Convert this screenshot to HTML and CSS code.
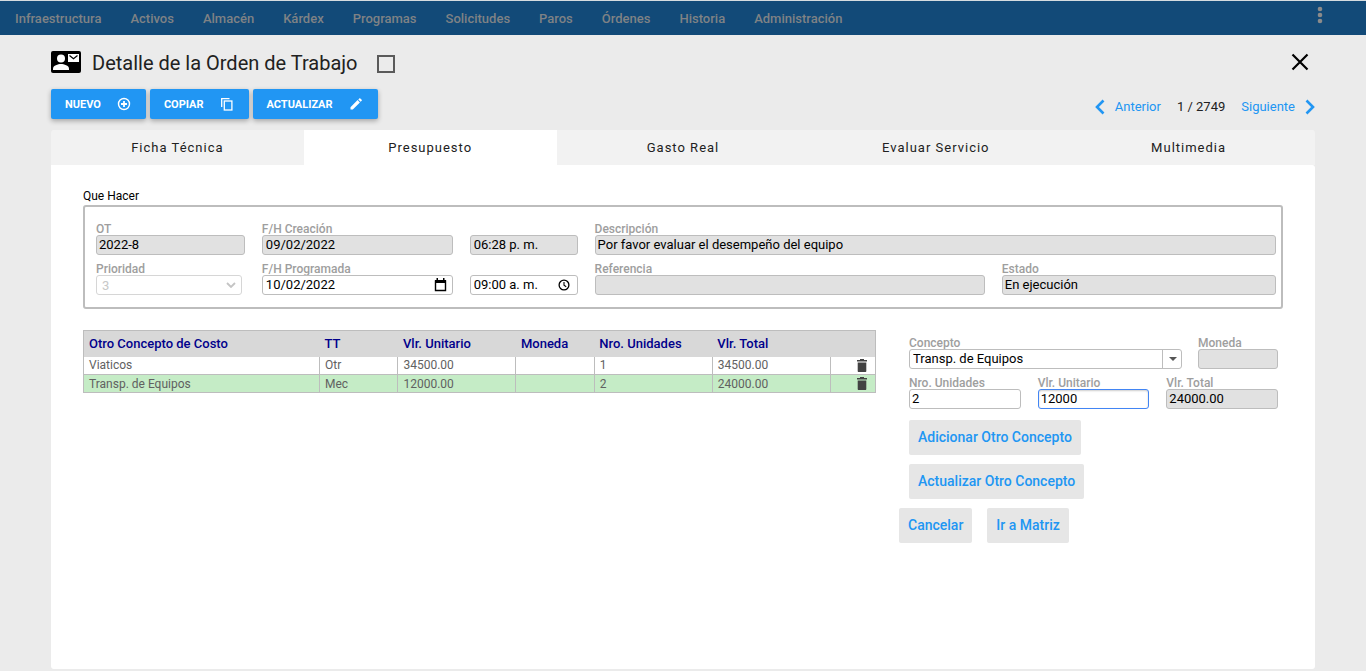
FILE: index.html
```html
<!DOCTYPE html>
<html lang="es">

    <head>
        <meta charset="utf-8">
        <title>Detalle de la Orden de Trabajo</title>
        <meta name="viewport" content="width=device-width, initial-scale=1.0">
        <link rel="stylesheet" href="styles.css">
    </head>

    <body>
        <header class="topbar">
            <nav class="menu">
                <a href="#">Infraestructura</a>
                <a href="#">Activos</a>
                <a href="#">Almacén</a>
                <a href="#">Kárdex</a>
                <a href="#">Programas</a>
                <a href="#">Solicitudes</a>
                <a href="#">Paros</a>
                <a href="#">Órdenes</a>
                <a href="#">Historia</a>
                <a href="#">Administración</a>
            </nav>
            <button type="button" class="icon-btn more" aria-label="Más opciones">
                <svg width="6" height="18" viewBox="0 0 6 18"><circle cx="3" cy="3" r="2.3"/><circle cx="3" cy="9" r="2.3"/><circle cx="3" cy="15" r="2.3"/></svg>
            </button>
        </header>

        <main class="page">
            <div class="title-row">
                <svg class="title-icon" width="30" height="22" viewBox="0 0 30 22">
                    <rect width="30" height="22" rx="2"/>
                    <circle cx="10" cy="7.500" r="4" fill="#fff"/>
                    <path d="M2 19v-1.500c0-3 5-4.500 8-4.500s8 1.500 8 4.500V19z" fill="#fff"/>
                    <rect x="17" y="3" width="11" height="8" fill="#fff"/>
                    <path d="M18.500 4.500l4 3.200 4-3.200" fill="none" stroke="#000" stroke-width="1.200"/>
                </svg>
                <h1>Detalle de la Orden de Trabajo</h1>
                <input type="checkbox" class="check" aria-label="Seleccionar orden">
                <button type="button" class="icon-btn close" aria-label="Cerrar">
                    <svg width="18" height="18" viewBox="0 0 18 18"><path d="M1.500 1.500l15 15M16.500 1.500l-15 15" fill="none" stroke="#000" stroke-width="2.200"/></svg>
                </button>
            </div>

            <div class="toolbar">
                <button type="button" class="action">NUEVO
                    <svg width="14" height="14" viewBox="0 0 14 14" fill="none" stroke="#fff" stroke-width="1.400"><circle cx="7" cy="7" r="5.500"/><path d="M7 4v6M4 7h6" stroke-width="1.800"/></svg>
                </button>
                <button type="button" class="action">COPIAR
                    <svg width="14" height="14" viewBox="0 0 14 14" fill="none" stroke="#fff" stroke-width="1.300"><path d="M1.700 10V1.600h7.800"/><rect x="4.300" y="4" width="7.600" height="9"/></svg>
                </button>
                <button type="button" class="action">ACTUALIZAR
                    <svg width="14" height="14" viewBox="0 0 14 14" fill="#fff"><path d="M1.500 10.200L8.600 3.100l2.300 2.300-7.100 7.100H1.500zM9.300 2.400l1-1c.3-.3.700-.3 1 0l1.400 1.400c.3.300.3.700 0 1l-1.100 1z"/></svg>
                </button>
                <div class="pager">
                    <a href="#"><svg width="10" height="16" viewBox="0 0 10 16"><path d="M8.500 1.500L2 8l6.500 6.500" fill="none" stroke="#2196f3" stroke-width="2.600"/></svg>Anterior</a>
                    <span>1 / 2749</span>
                    <a href="#">Siguiente<svg width="10" height="16" viewBox="0 0 10 16"><path d="M1.500 1.500L8 8l-6.500 6.500" fill="none" stroke="#2196f3" stroke-width="2.600"/></svg></a>
                </div>
            </div>

            <div class="tabs" role="tablist">
                <button type="button" role="tab">Ficha Técnica</button>
                <button type="button" role="tab" class="active" aria-selected="true">Presupuesto</button>
                <button type="button" role="tab">Gasto Real</button>
                <button type="button" role="tab">Evaluar Servicio</button>
                <button type="button" role="tab">Multimedia</button>
            </div>

            <section class="panel">
                <div class="caption">Que Hacer</div>
                <div class="order">
                    <div class="field">
                        <label for="ot">OT</label>
                        <input type="text" id="ot" value="2022-8" readonly>
                    </div>
                    <div class="field">
                        <label for="created">F/H Creación</label>
                        <input type="text" id="created" class="spaced" value="09/02/2022" readonly>
                    </div>
                    <div class="field">
                        <input type="text" class="spaced" value="06:28 p. m." aria-label="Hora de creación" readonly>
                    </div>
                    <div class="field">
                        <label for="description">Descripción</label>
                        <input type="text" id="description" value="Por favor evaluar el desempeño del equipo" readonly>
                    </div>

                    <div class="field priority">
                        <label for="priority">Prioridad</label>
                        <div class="box">
                            <select id="priority" disabled>
                                <option>3</option>
                            </select>
                            <svg class="box-icon" width="10" height="6" viewBox="0 0 10 6"><path d="M1 1l4 4 4-4" fill="none" stroke="#c4c4c4" stroke-width="1.800"/></svg>
                        </div>
                    </div>
                    <div class="field">
                        <label for="planned">F/H Programada</label>
                        <div class="box">
                            <input type="text" id="planned" class="spaced" value="10/02/2022">
                            <svg class="box-icon" width="13" height="14" viewBox="0 0 13 14"><path d="M1.500 3h10v9.500h-10z" fill="none" stroke="#000" stroke-width="1.400"/><path d="M1 2h11v3H1zM2.500 0h1.500v2H2.500zM9 0h1.500v2H9z"/></svg>
                        </div>
                    </div>
                    <div class="field">
                        <div class="box">
                            <input type="text" class="spaced" value="09:00 a. m." aria-label="Hora programada">
                            <svg class="box-icon clock" width="12" height="12" viewBox="0 0 12 12" fill="none" stroke="#000" stroke-width="1.300"><circle cx="6" cy="6" r="4.900"/><path d="M6 3v3.200l2.200 1.500" stroke-width="1.100"/></svg>
                        </div>
                    </div>
                    <div class="split">
                        <div class="field">
                            <label for="reference">Referencia</label>
                            <input type="text" id="reference" readonly>
                        </div>
                        <div class="field">
                            <label for="status">Estado</label>
                            <input type="text" id="status" value="En ejecución" readonly>
                        </div>
                    </div>
                </div>

                <div class="costs">
                    <table class="grid">
                        <colgroup>
                            <col class="c-name">
                            <col class="c-small">
                            <col class="c-mid">
                            <col class="c-small">
                            <col class="c-mid">
                            <col class="c-mid">
                            <col>
                        </colgroup>
                        <thead>
                            <tr>
                                <th>Otro Concepto de Costo</th>
                                <th>TT</th>
                                <th>Vlr. Unitario</th>
                                <th>Moneda</th>
                                <th>Nro. Unidades</th>
                                <th>Vlr. Total</th>
                                <th></th>
                            </tr>
                        </thead>
                        <tbody>
                            <tr>
                                <td>Viaticos</td>
                                <td>Otr</td>
                                <td>34500.00</td>
                                <td></td>
                                <td>1</td>
                                <td>34500.00</td>
                                <td class="remove"><button type="button" class="icon-btn" aria-label="Eliminar"><svg width="10" height="13" viewBox="0 0 10 13"><path d="M3 0h4v1h3v1.500H0V1h3zM.7 3.500h8.600V12c0 .6-.4 1-1 1H1.700c-.6 0-1-.4-1-1z"/></svg></button></td>
                            </tr>
                            <tr class="selected">
                                <td>Transp. de Equipos</td>
                                <td>Mec</td>
                                <td>12000.00</td>
                                <td></td>
                                <td>2</td>
                                <td>24000.00</td>
                                <td class="remove"><button type="button" class="icon-btn" aria-label="Eliminar"><svg width="10" height="13" viewBox="0 0 10 13"><path d="M3 0h4v1h3v1.500H0V1h3zM.7 3.500h8.600V12c0 .6-.4 1-1 1H1.700c-.6 0-1-.4-1-1z"/></svg></button></td>
                            </tr>
                        </tbody>
                    </table>

                    <form class="cost-form">
                        <div class="form-row concept-row">
                            <div class="field">
                                <label for="concept">Concepto</label>
                                <div class="box">
                                    <select id="concept">
                                        <option>Transp. de Equipos</option>
                                        <option>Viaticos</option>
                                    </select>
                                    <span class="drop"><svg width="8" height="4" viewBox="0 0 8 4"><path d="M0 0h8L4 4z" fill="#555"/></svg></span>
                                </div>
                            </div>
                            <div class="field">
                                <label for="currency">Moneda</label>
                                <input type="text" id="currency" readonly>
                            </div>
                        </div>
                        <div class="form-row values-row">
                            <div class="field">
                                <label for="units">Nro. Unidades</label>
                                <input type="text" id="units" value="2">
                            </div>
                            <div class="field">
                                <label for="unitPrice">Vlr. Unitario</label>
                                <input type="text" id="unitPrice" value="12000">
                            </div>
                            <div class="field">
                                <label for="total">Vlr. Total</label>
                                <input type="text" id="total" value="24000.00" readonly>
                            </div>
                        </div>
                        <div class="form-buttons">
                            <button type="button" class="flat">Adicionar Otro Concepto</button>
                            <button type="button" class="flat">Actualizar Otro Concepto</button>
                        </div>
                        <div class="form-footer">
                            <button type="button" class="flat">Cancelar</button>
                            <button type="button" class="flat">Ir a Matriz</button>
                        </div>
                    </form>
                </div>
            </section>
        </main>

        <script>
            // leave the cursor at the end of the unit price
            const unitPrice = document.getElementById('unitPrice');
            unitPrice.focus();
            unitPrice.setSelectionRange(unitPrice.value.length, unitPrice.value.length);
        </script>
    </body>

</html>
```

FILE: styles.css
```css
* {
    box-sizing: border-box;
}

body {
    margin: 0;
    min-height: 100vh;
    display: flex;
    flex-direction: column;
    background: #ebebeb;
    color: #212121;
    font-family: Roboto, sans-serif;
    font-size: 13px;
}

button,
input,
select {
    font-family: inherit;
}

a {
    text-decoration: none;
}

svg {
    display: block;
    flex: none;
}

.icon-btn {
    padding: 0;
    border: 0;
    background: none;
    cursor: pointer;
}

/* top menu */
.topbar {
    display: flex;
    justify-content: space-between;
    height: 35px;
    padding: 0 43px 0 15px;
    border-top: 1px solid #d5dce0;
    background: #124a78;
}

.menu {
    display: flex;
    align-items: center;
    gap: 29px;
}

.menu a {
    color: #7f8285;
    font-weight: 500;
}

.more {
    align-self: flex-start;
    margin-top: 5px;
    fill: #8b8b8b;
}

.page {
    flex: 1;
    display: flex;
    flex-direction: column;
    padding: 0 51px 2px;
}

/* title */
.title-row {
    display: flex;
    align-items: center;
    height: 54px;
}

h1 {
    margin: 0 20px 0 11px;
    padding-top: 2px;
    font-size: 20px;
    font-weight: 400;
    line-height: 24px;
}

.check {
    appearance: none;
    width: 18px;
    height: 18px;
    margin: 4px 0 0;
    border: 2px solid #5a5a5a;
}

.close {
    margin-left: auto;
    margin-right: 6px;
}

/* toolbar */
.toolbar {
    display: flex;
    align-items: center;
    gap: 4px;
    margin-bottom: 11px;
}

.action {
    display: flex;
    align-items: center;
    gap: 16px;
    height: 30px;
    padding: 0 15px 0 14px;
    border: 0;
    border-radius: 2px;
    background: #2196f3;
    box-shadow: 0 2px 5px rgba(0, 0, 0, .3);
    color: #fff;
    font-size: 11px;
    font-weight: 700;
}

.pager {
    display: flex;
    align-items: center;
    gap: 16px;
    margin-left: auto;
    padding-top: 5px;
}

.pager a {
    display: flex;
    align-items: center;
    gap: 10px;
    color: #2196f3;
}

/* tabs */
.tabs {
    display: flex;
}

.tabs button {
    flex: 1;
    height: 35px;
    border: 0;
    background: #f2f2f2;
    color: #212121;
    font-size: 13px;
    letter-spacing: 1px;
}

.tabs .active {
    background: #fff;
}

.tabs button:first-child {
    border-top-left-radius: 3px;
}

.tabs button:last-child {
    border-top-right-radius: 3px;
}

.panel {
    flex: 1;
    padding: 24px 32px;
    border-radius: 0 3px 3px 3px;
    background: #fff;
}

.caption {
    margin-bottom: 2px;
    color: #000;
    font-size: 12px;
    line-height: 14px;
}

/* fields */
.field {
    display: flex;
    flex-direction: column;
    justify-content: flex-end;
    min-width: 0;
}

.field label {
    color: #9e9e9e;
    font-size: 12px;
    font-weight: 500;
    line-height: 11px;
}

.field input,
.field select {
    width: 100%;
    height: 20px;
    padding: 0 2px 2px;
    border: 1px solid #bdbdbd;
    border-radius: 3px;
    background: #fff;
    color: #000;
    font-size: 13px;
    outline: 0;
}

.field input[readonly] {
    background: #e1e1e1;
}

.field input:focus {
    border-color: #4285f4;
    box-shadow: inset 0 1px 2px rgba(0, 0, 0, .2);
}

.field .spaced {
    padding-left: 3px;
}

.field select {
    display: block;
    padding-left: 3px;
    appearance: none;
}

.field select:disabled {
    padding: 0 5px;
    border-color: #d6d6d6;
    color: #c8c8c8;
    opacity: 1;
}

.box {
    position: relative;
}

.box-icon {
    position: absolute;
    top: 0;
    bottom: 0;
    right: 6px;
    margin: auto 0;
    pointer-events: none;
}

.clock {
    right: 8px;
}

.drop {
    position: absolute;
    top: 0;
    right: 0;
    display: flex;
    align-items: center;
    justify-content: center;
    width: 20px;
    height: 20px;
    border-left: 1px solid #bdbdbd;
    pointer-events: none;
}

.order {
    display: grid;
    grid-template-columns: 149fr 191fr 108fr 682fr;
    gap: 9px 17px;
    padding: 17px 5px 12px 11px;
    border: 2px solid #bdbdbd;
    border-radius: 3px;
}

.priority {
    padding-right: 3px;
}

.split {
    display: grid;
    grid-template-columns: 390fr 274fr;
    gap: 17px;
}

/* cost table and its form */
.costs {
    display: grid;
    grid-template-columns: 793fr 384fr;
    align-items: start;
    gap: 23px;
    margin-top: 21px;
}

.grid {
    width: 100%;
    border: 1px solid #bdbdbd;
    border-collapse: collapse;
    table-layout: fixed;
}

.c-name {
    width: 29.8%;
}

.c-small {
    width: 9.9%;
}

.c-mid {
    width: 14.9%;
}

.grid th {
    height: 26px;
    padding: 0 5px;
    background: #d8d8d8;
    color: #00008b;
    font-size: 13px;
    font-weight: 500;
    text-align: left;
}

.grid td {
    height: 18px;
    padding: 0 5px;
    border: 1px solid #bdbdbd;
    color: #616161;
    font-size: 12px;
    line-height: 16px;
}

.grid tbody tr:first-child td {
    border-top: 0;
}

.selected {
    background: #c5ecc6;
}

.grid .remove {
    padding-right: 8px;
}

.remove .icon-btn {
    display: block;
    margin-left: auto;
    fill: #424242;
}

.cost-form {
    padding: 8px 5px 0 0;
}

.form-row {
    display: grid;
    padding-left: 10px;
    margin-bottom: 9px;
}

.concept-row {
    grid-template-columns: 273fr 80fr;
    column-gap: 16px;
}

.values-row {
    grid-template-columns: repeat(3, 1fr);
    column-gap: 17px;
    margin-bottom: 11px;
}

.form-buttons {
    display: flex;
    flex-direction: column;
    align-items: flex-start;
    gap: 9px;
    padding-left: 10px;
}

.form-footer {
    display: flex;
    gap: 15px;
    margin-top: 9px;
}

.flat {
    height: 35px;
    padding: 0 9px 2px;
    border: 0;
    border-radius: 2px;
    background: #e6e6e6;
    color: #2196f3;
    font-size: 14px;
    font-weight: 500;
}
```
